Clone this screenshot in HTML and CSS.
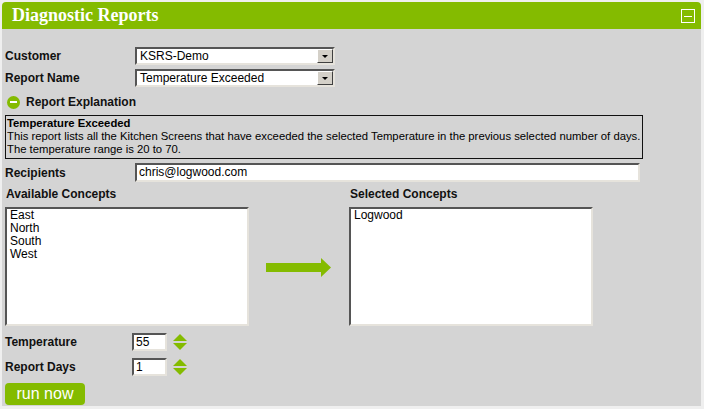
FILE: index.html
```html
<!DOCTYPE html>
<html>
<head>
<meta charset="utf-8">
<link rel="stylesheet" href="styles.css">
</head>
<body>
<div class="panel">
  <div class="header">
    <span class="title">Diagnostic Reports</span>
    <span class="minbox"><span class="minbar"></span></span>
  </div>
  <div class="content">
    <div class="row r-customer">
      <span class="label w130">Customer</span>
      <div class="select"><span class="sel-text">KSRS-Demo</span><span class="sel-btn"><span class="tri"></span></span></div>
    </div>
    <div class="row r-report">
      <span class="label w130">Report Name</span>
      <div class="select"><span class="sel-text">Temperature Exceeded</span><span class="sel-btn"><span class="tri"></span></span></div>
    </div>
    <div class="row r-expl">
      <span class="circle"><span class="cbar"></span></span>
      <span class="label">Report Explanation</span>
    </div>
    <div class="explbox">
      <div class="eb-title">Temperature Exceeded</div>
      <div>This report lists all the Kitchen Screens that have exceeded the selected Temperature in the previous selected number of days.</div>
      <div>The temperature range is 20 to 70.</div>
    </div>
    <div class="row r-recip">
      <span class="label w130">Recipients</span>
      <div class="textin wide">chris@logwood.com</div>
    </div>
    <div class="concepts">
      <div class="col">
        <div class="label">Available Concepts</div>
        <div class="listbox">
          <div>East</div><div>North</div><div>South</div><div>West</div>
        </div>
      </div>
      <div class="arrowcol">
        <svg class="arrow" width="66" height="19" viewBox="0 0 66 19"><polygon points="0,5 55,5 55,0 65,9.5 55,19 55,14 0,14" fill="#84bb00"/></svg>
      </div>
      <div class="col">
        <div class="label">Selected Concepts</div>
        <div class="listbox">
          <div>Logwood</div>
        </div>
      </div>
    </div>
    <div class="row r-temp">
      <span class="label w127">Temperature</span>
      <div class="textin small">55</div>
      <svg class="spin" width="14" height="16" viewBox="0 0 14 16"><polygon points="7,0 14,7 0,7" fill="#84bb00"/><polygon points="0,9 14,9 7,16" fill="#84bb00"/></svg>
    </div>
    <div class="row r-days">
      <span class="label w127">Report Days</span>
      <div class="textin small">1</div>
      <svg class="spin" width="14" height="16" viewBox="0 0 14 16"><polygon points="7,0 14,7 0,7" fill="#84bb00"/><polygon points="0,9 14,9 7,16" fill="#84bb00"/></svg>
    </div>
    <div class="btnrow"><span class="runbtn">run now</span></div>
  </div>
</div>
</body>
</html>
```
FILE: styles.css
```css
html, body { margin: 0; padding: 0; background: #efefef; }
body { font-family: "Liberation Sans", Arial, sans-serif; font-size: 12px; color: #000; }
.panel { margin: 2px 0 0 2px; width: 699px; }
.header {
  height: 27px; background: #84bb00; border-radius: 4px 4px 0 0;
  display: flex; align-items: center; justify-content: space-between;
  padding: 0 6px 0 10px;
}
.title { font-family: "Liberation Serif", "Times New Roman", serif; font-weight: bold; font-size: 18px; color: #fff; }
.minbox { width: 12px; height: 12px; border: 1px solid #fff; display: flex; align-items: center; justify-content: center; margin-top: 1px; }
.minbar { width: 8px; height: 1px; background: #fff; }
.content { background: #d4d4d4; padding: 18px 0 2px 3px; height: 357px; }
.row { display: flex; align-items: center; }
.label { font-weight: bold; font-size: 12px; color: #111; }
.w130 { width: 130px; flex: none; }
.w127 { width: 127px; flex: none; }
.select {
  width: 196px; height: 14px; background: #fff; display: flex; align-items: center; justify-content: space-between;
  border: 2px solid; border-color: #555 #e6e3dc #e6e3dc #555;
}
.sel-text { padding-left: 3px; font-size: 12px; }
.sel-btn {
  width: 16px; height: 14px; background: #d4d0c8; box-sizing: border-box;
  border: 1px solid; border-color: #fff #404040 #404040 #fff;
  display: flex; align-items: center; justify-content: center;
}
.tri { width: 0; height: 0; border-left: 3px solid transparent; border-right: 3px solid transparent; border-top: 3px solid #000; margin-top: 1px; }
.r-customer { height: 18px; }
.r-report { height: 18px; margin-top: 4px; }
.r-expl { height: 14px; margin-top: 8px; }
.circle { width: 13px; height: 13px; border-radius: 50%; background: #84bb00; display: flex; align-items: center; justify-content: center; margin: 0 6px 0 2px; }
.cbar { width: 7px; height: 2px; background: #fff; }
.explbox {
  margin-top: 6px; width: 635px; border: 1px solid #111; padding: 1px 0 0 1px;
  font-size: 11.3px; line-height: 13px; height: 41px; box-sizing: content-box;
}
.eb-title { font-weight: bold; }
.r-recip { height: 19px; margin-top: 4px; }
.textin {
  background: #fff; font-size: 12px; padding-left: 2px; line-height: 15px;
  border: 2px solid; border-color: #555 #e6e3dc #e6e3dc #555;
}
.wide { width: 499px; height: 15px; }
.small { width: 29px; height: 14px; }
.concepts { display: flex; margin-top: 6px; }
.col { display: flex; flex-direction: column; }
.col .label { height: 13px; line-height: 13px; margin-left: 1px; }
.listbox {
  margin-top: 6px; width: 237px; height: 115px; background: #fff; padding: 0 0 0 3px;
  border: 2px solid; border-color: #555 #e6e3dc #e6e3dc #555; font-size: 12px; line-height: 13px;
}
.arrowcol { width: 100px; display: flex; align-items: flex-start; padding-top: 70px; box-sizing: border-box; padding-left: 17px; }
.arrow { display: block; }
.r-temp { height: 18px; margin-top: 7px; }
.r-days { height: 18px; margin-top: 7px; }
.spin { margin-left: 6px; }
.btnrow { margin-top: 7px; }
.runbtn {
  display: inline-flex; align-items: center; justify-content: center;
  width: 80px; height: 22px; background: #84bb00; color: #fff; font-size: 16px; border-radius: 4px;
}
```
